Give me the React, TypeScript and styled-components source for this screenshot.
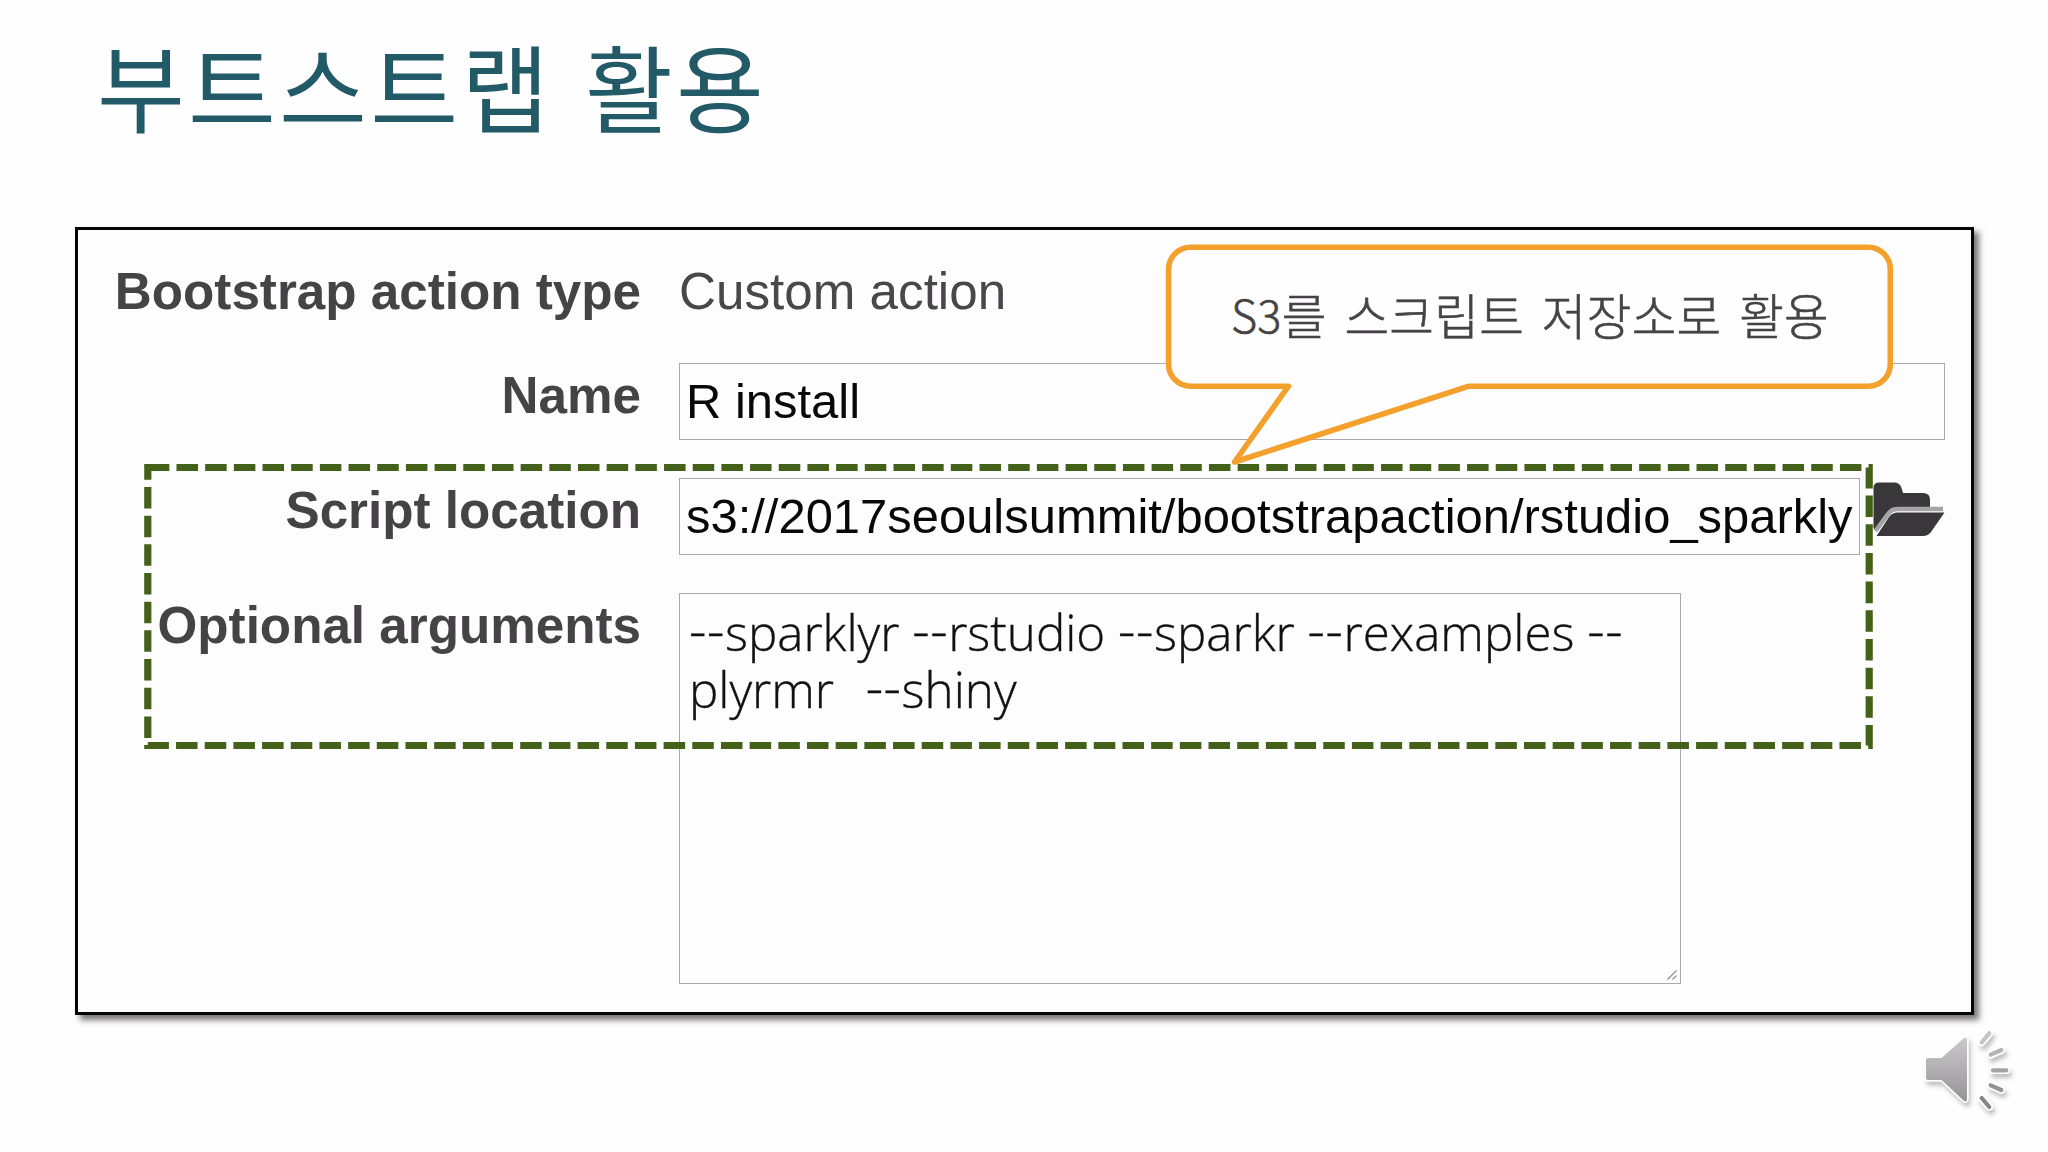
import React from "react";
import styled, { createGlobalStyle } from "styled-components";

const GlobalStyle = createGlobalStyle`
  body {
    margin: 0;
    background: #fefefe;
    overflow: hidden;
  }
  *, *::before, *::after { box-sizing: border-box; }
`;

const korean = `"Noto Sans CJK KR", sans-serif`;
const arial = `"Liberation Sans", Arial, sans-serif`;

const Slide = styled.main`
  position: relative;
  display: flex;
  flex-direction: column;
  width: 2048px;
  height: 1152px;
  background: #fefefe;
`;

const Header = styled.header`
  height: 227px;
  padding: 16px 0 0 97px;
`;

const Title = styled.h1`
  margin: 0;
  font: 400 95.5px/138px ${korean};
  letter-spacing: 3.2px;
  word-spacing: 8px;
  color: #235a68;
  white-space: nowrap;
`;

const Panel = styled.section`
  display: flex;
  flex-direction: column;
  width: 1899px;
  height: 788px;
  margin-left: 75px;
  padding-top: 31px;
  border: 3px solid #050505;
  background: #fdfdfd;
  box-shadow: 5px 5px 6px rgba(40, 32, 42, 0.62);
`;

const Row = styled.div<{ $height: number }>`
  display: grid;
  grid-template-columns: 563px 1fr;
  column-gap: 38px;
  align-items: start;
  height: ${(p) => p.$height}px;
`;

const Label = styled.label<{ $drop?: number }>`
  padding-top: ${(p) => p.$drop ?? 0}px;
  font: 700 51.2px/62px ${arial};
  color: #454346;
  text-align: right;
  white-space: nowrap;
`;

const Value = styled.span`
  font: 400 51.2px/62px ${arial};
  color: #49474a;
`;

const FieldGroup = styled.div`
  display: flex;
  align-items: flex-start;
  gap: 13px;
`;

const Field = styled.div<{ $width: number }>`
  width: ${(p) => p.$width}px;
  height: 77px;
  padding-left: 6px;
  border: 1px solid #aba8ac;
  font: 400 48.93px/75px ${arial};
  color: #080808;
  white-space: nowrap;
  overflow: hidden;
`;

const FolderSvg = styled.svg`
  width: 74px;
  height: 56px;
  margin-top: 3px;
`;

const TextArea = styled.div`
  position: relative;
  width: 1002px;
  height: 391px;
  padding: 10px 0 0 9px;
  border: 1px solid #aba8ac;
  font: 300 49.3px/56.5px "Open Sans", sans-serif;
  color: #111;
  -webkit-text-stroke: 0.35px #111;
  white-space: pre;
`;

const Dashes = styled.span`
  position: relative;
  top: -2px;
  font-size: 54px;
  line-height: 0;
  letter-spacing: 0.6px;
`;

const WideGap = styled.span`
  word-spacing: 3px;
`;

const Grip = styled.svg`
  position: absolute;
  right: 3px;
  bottom: 3px;
  width: 10px;
  height: 10px;
`;

const Overlay = styled.svg`
  position: absolute;
  left: 0;
  top: 0;
  width: 2048px;
  height: 1152px;
  pointer-events: none;
`;

const CalloutText = styled.div`
  position: absolute;
  left: 1166px;
  top: 241px;
  width: 728px;
  height: 145px;
  display: flex;
  align-items: center;
  justify-content: center;
  font: 300 48.5px/60px ${korean};
  letter-spacing: 0.3px;
  word-spacing: 6.7px;
  color: #454346;
  -webkit-text-stroke: 0.6px #454346;
  white-space: pre;
`;

const Latin = styled.span`
  font-size: 45px;
`;

const FolderIcon = () => (
  <FolderSvg viewBox="0 0 74 56">
    <path d="M0.500 47V7Q0.500 1.500 6 1.500H21Q27 1.500 28.500 7L30 12H50Q57 12 57 19V29H24Q19 29 16 33L3 50Z" fill="#39373a" />
    <path d="M2.500 50L15 33Q18.500 28 25 28H70" fill="none" stroke="#a5a3a6" strokeWidth="4.500" />
    <path d="M3.500 55L16 36Q19 31.500 25 31.500H71.500L58 51Q55 55 50 55Z" fill="#39373a" />
  </FolderSvg>
);

const waves = [
  { d: "M1981.700 1042.300L1989.300 1033.300", color: "#c6c4c6" },
  { d: "M1990.700 1054.700L2001.300 1050", color: "#b5b3b5" },
  { d: "M1993 1070.300H2006.300", color: "#a5a3a5" },
  { d: "M1990.700 1085.300L2001.300 1090", color: "#949294" },
  { d: "M1981.700 1098L1989.300 1107", color: "#878587" },
];

const Speaker = () => (
  <g filter="url(#speakerShadow)">
    <path
      d="M1928 1058H1941.500L1963.500 1038.500Q1967 1036 1967 1040V1099Q1967 1103 1963.500 1100.500L1941.500 1080H1928Q1926 1080 1926 1078V1060Q1926 1058 1928 1058Z"
      fill="url(#speakerFill)"
      stroke="#fff"
      strokeWidth="3"
      paintOrder="stroke"
    />
    {waves.map((w) => (
      <g key={w.d} fill="none" strokeLinecap="round">
        <path d={w.d} stroke="#fff" strokeWidth="7.500" />
        <path d={w.d} stroke={w.color} strokeWidth="4.200" />
      </g>
    ))}
  </g>
);

export default function App() {
  return (
    <>
      <GlobalStyle />
      <Slide>
        <Header>
          <Title>부트스트랩 활용</Title>
        </Header>
        <Panel>
          <Row $height={102}>
            <Label>Bootstrap action type</Label>
            <Value>Custom action</Value>
          </Row>
          <Row $height={115}>
            <Label $drop={2}>Name</Label>
            <Field $width={1266}>R install</Field>
          </Row>
          <Row $height={115}>
            <Label $drop={2}>Script location</Label>
            <FieldGroup>
              <Field $width={1181}>s3://2017seoulsummit/bootstrapaction/rstudio_sparkly</Field>
              <FolderIcon />
            </FieldGroup>
          </Row>
          <Row $height={391}>
            <Label $drop={2}>Optional arguments</Label>
            <TextArea>
              <Dashes>--</Dashes>sparklyr <Dashes>--</Dashes>rstudio <Dashes>--</Dashes>sparkr <Dashes>--</Dashes>rexamples <Dashes>--</Dashes>
              {"\n"}
              <WideGap>{"plyrmr  "}</WideGap>
              <Dashes>--</Dashes>shiny
              <Grip viewBox="0 0 10 10">
                <path d="M0.500 9.500L9.500 0.500M5.500 9.500L9.500 5.500" stroke="#8d8b8e" strokeWidth="1.200" />
              </Grip>
            </TextArea>
          </Row>
        </Panel>
        <Overlay viewBox="0 0 2048 1152">
          <defs>
            <linearGradient id="speakerFill" x1="0" y1="0" x2="0" y2="1">
              <stop offset="0" stopColor="#cbc9cb" />
              <stop offset="1" stopColor="#969496" />
            </linearGradient>
            <filter id="speakerShadow" x="-20%" y="-20%" width="150%" height="150%">
              <feDropShadow dx="2" dy="4" stdDeviation="2" floodColor="#3a303c" floodOpacity="0.32" />
            </filter>
          </defs>
          <path
            d="M147.800 467.500H1869.200V745.500H147.800Z"
            fill="none"
            stroke="#436118"
            strokeWidth="7.170"
            strokeDasharray="21.510 7.170"
          />
          <path
            d="M1190.600 247.200H1868.300A22 22 0 0 1 1890.300 269.200V364.200A22 22 0 0 1 1868.300 386.200H1469L1234.500 462L1288.500 386.200H1190.600A22 22 0 0 1 1168.600 364.200V269.200A22 22 0 0 1 1190.600 247.200Z"
            fill="#fefefe"
            stroke="#f3a02c"
            strokeWidth="5.600"
            strokeLinejoin="round"
          />
          <Speaker />
        </Overlay>
        <CalloutText><Latin>S3</Latin>를 스크립트 저장소로 활용</CalloutText>
      </Slide>
    </>
  );
}
